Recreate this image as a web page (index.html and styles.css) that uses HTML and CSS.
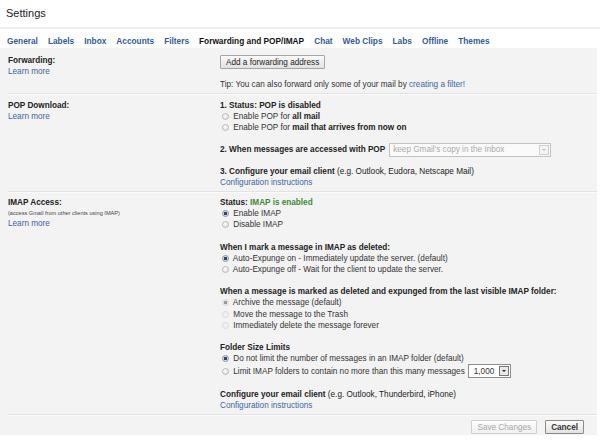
FILE: index.html
```html
<!DOCTYPE html>
<html lang="en">
<head>
  <meta charset="UTF-8">
  <title>Settings</title>
  <link rel="stylesheet" href="styles.css">
</head>
<body>
  <h1 class="title">Settings</h1>

  <nav class="tabs">
    <a href="#">General</a>
    <a href="#">Labels</a>
    <a href="#">Inbox</a>
    <a href="#">Accounts</a>
    <a href="#">Filters</a>
    <span class="current">Forwarding and POP/IMAP</span>
    <a href="#">Chat</a>
    <a href="#">Web Clips</a>
    <a href="#">Labs</a>
    <a href="#">Offline</a>
    <a href="#">Themes</a>
  </nav>

  <div class="panel">
    <div class="section fwd">
      <div class="label">
        <b>Forwarding:</b>
        <a href="#">Learn more</a>
      </div>
      <div class="content">
        <div><button class="btn">Add a forwarding address</button></div>
        <p class="tip">Tip: You can also forward only some of your mail by <a href="#">creating a filter!</a></p>
      </div>
    </div>

    <div class="section pop">
      <div class="label">
        <b>POP Download:</b>
        <a href="#">Learn more</a>
      </div>
      <div class="content">
        <div class="group">
          <b>1. Status: POP is disabled</b>
          <label class="opt"><input type="radio" name="pop"> Enable POP for <b>all mail</b></label>
          <label class="opt"><input type="radio" name="pop"> Enable POP for <b>mail that arrives from now on</b></label>
        </div>
        <div class="group row">
          <b>2. When messages are accessed with POP</b>
          <div class="select wide disabled">
            <span>keep Gmail's copy in the Inbox</span>
            <i class="arrow"></i>
          </div>
        </div>
        <div class="group">
          <div><b>3. Configure your email client</b> (e.g. Outlook, Eudora, Netscape Mail)</div>
          <a href="#">Configuration instructions</a>
        </div>
      </div>
    </div>

    <div class="section imap">
      <div class="label">
        <b>IMAP Access:</b>
        <small>(access Gmail from other clients using IMAP)</small>
        <a href="#">Learn more</a>
      </div>
      <div class="content">
        <div class="group">
          <b>Status: <span class="ok">IMAP is enabled</span></b>
          <label class="opt"><input type="radio" name="imap" checked> Enable IMAP</label>
          <label class="opt"><input type="radio" name="imap"> Disable IMAP</label>
        </div>
        <div class="group">
          <b>When I mark a message in IMAP as deleted:</b>
          <label class="opt"><input type="radio" name="expunge" checked> Auto-Expunge on - Immediately update the server. (default)</label>
          <label class="opt"><input type="radio" name="expunge"> Auto-Expunge off - Wait for the client to update the server.</label>
        </div>
        <div class="group">
          <b>When a message is marked as deleted and expunged from the last visible IMAP folder:</b>
          <label class="opt"><input type="radio" name="expunged" checked disabled> Archive the message (default)</label>
          <label class="opt"><input type="radio" name="expunged" disabled> Move the message to the Trash</label>
          <label class="opt"><input type="radio" name="expunged" disabled> Immediately delete the message forever</label>
        </div>
        <div class="group">
          <b>Folder Size Limits</b>
          <label class="opt"><input type="radio" name="limit" checked> Do not limit the number of messages in an IMAP folder (default)</label>
          <div class="opt row">
            <label><input type="radio" name="limit"> Limit IMAP folders to contain no more than this many messages</label>
            <div class="select small">
              <span>1,000</span>
              <i class="arrow"></i>
            </div>
          </div>
        </div>
        <div class="group">
          <div><b>Configure your email client</b> (e.g. Outlook, Thunderbird, iPhone)</div>
          <a href="#">Configuration instructions</a>
        </div>
      </div>
    </div>

    <div class="actions">
      <button class="btn" disabled>Save Changes</button>
      <button class="btn strong">Cancel</button>
    </div>
  </div>
</body>
</html>
```

FILE: styles.css
```css
*, *::before, *::after {
  box-sizing: border-box;
}

body {
  margin: 0;
  background: #fff;
  color: #222;
  font-family: "Liberation Sans", Arial, sans-serif;
  font-size: 8.2px;
  line-height: 11px;
}

a {
  color: #3f65a0;
  text-decoration: none;
}

b {
  font-weight: bold;
}

.title {
  margin: 0;
  padding: 6px 6px 7px;
  font-size: 11px;
  font-weight: normal;
  line-height: 14px;
  border-bottom: 2px solid #efefef;
}

.tabs {
  display: flex;
  gap: 10px;
  padding: 6.5px 7px 1.5px;
  font-size: 8.3px;
  font-weight: bold;
  line-height: 11px;
}

.tabs a {
  color: #365a92;
}

.tabs .current {
  color: #111;
}

.panel {
  background: #f3f3f3;
  margin-right: 3px;
}

.section {
  display: grid;
  grid-template-columns: 212px 1fr;
  margin: 0 0 0 8px;
  border-bottom: 1px solid #e3e3e3;
  box-shadow: 0 1px 0 #fbfbfb;
}

.fwd { padding: 7px 0 2.5px; }
.pop { padding: 6.5px 0 2.5px; }
.imap { padding: 5.5px 0 3px; }

.label {
  display: flex;
  flex-direction: column;
  align-items: flex-start;
}

.label small {
  font-size: 5.6px;
  line-height: 10px;
  color: #444;
}

.content {
  display: flex;
  flex-direction: column;
}

.tip {
  margin: 10px 0 0;
  color: #333;
}

.pop .content { gap: 9.5px; }
.imap .content { gap: 11px; }

.group {
  display: flex;
  flex-direction: column;
  align-items: flex-start;
}

.row {
  flex-direction: row;
  align-items: center;
  gap: 4px;
}

.opt {
  display: flex;
  align-items: center;
  height: 11.3px;
  white-space: pre;
  color: #333;
}

.pop .opt {
  height: 11px;
}

.opt label {
  display: flex;
  align-items: center;
  white-space: pre;
}

.opt.row {
  height: 14px;
  gap: 3px;
}

.opt b {
  color: #222;
}

.opt input {
  appearance: none;
  width: 7px;
  height: 7px;
  margin: 0 2px 0 2px;
  border-radius: 50%;
  border: 1px solid #b9b9b9;
  background: radial-gradient(circle at 40% 35%, #fdfdfd, #dcdcdc);
}

.opt input:checked {
  border-color: #8b96a8;
  background: radial-gradient(circle, #2f4466 0 1.4px, #c9d3e2 1.8px, #eef1f6 3px);
}

.opt input:disabled {
  border-color: #dadada;
  background: #f0f0f0;
}

.opt input:disabled:checked {
  background: radial-gradient(circle, #9a9a9a 0 1.4px, #e6e6e6 1.8px);
}

.ok {
  color: #3f8a36;
}

.select {
  display: flex;
  align-items: center;
  height: 14px;
  border: 1px solid #c3c3c3;
  background: #fff;
  padding-left: 3px;
}

.select span {
  flex: 1;
}

.select.wide {
  width: 162px;
}

.select.small {
  width: 43px;
  border-color: #8e8e8e;
  padding-left: 5px;
}

.select.disabled {
  color: #aaa;
  background: #fafafa;
}

.arrow {
  position: relative;
  width: 10px;
  height: 10px;
  margin-right: 1px;
  border: 1px solid #cfcfcf;
  background: #f4f4f4;
}

.arrow::after {
  content: '';
  position: absolute;
  left: 2px;
  top: 3px;
  border: 2px solid transparent;
  border-top: 2.5px solid #bbb;
}

.small .arrow {
  border-color: #777;
  background: #e9e9e9;
}

.small .arrow::after {
  border-top-color: #222;
}

.btn {
  font-family: inherit;
  font-size: 8.2px;
  line-height: 11px;
  height: 14px;
  padding: 0 5px;
  color: #222;
  border: 1px solid #a6a6a6;
  border-radius: 1px;
  background: linear-gradient(#fbfbfb, #e2e2e2);
}

.btn:disabled {
  color: #a8a8a8;
  border-color: #cfcfcf;
  background: linear-gradient(#fdfdfd, #f0f0f0);
}

.btn.strong {
  font-weight: bold;
  color: #333;
  border-color: #8a8a8a;
}

.actions {
  display: flex;
  justify-content: flex-end;
  gap: 8px;
  padding: 5px 13px 1px 0;
}
```
